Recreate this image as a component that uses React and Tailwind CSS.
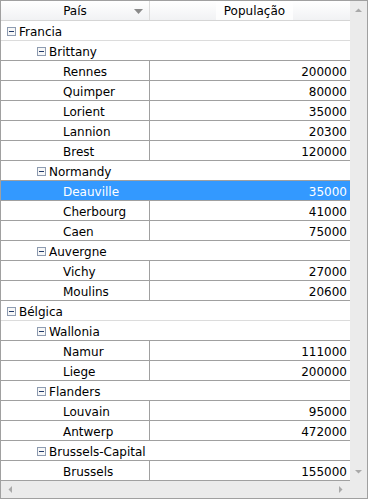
import React from 'react';

const rows = [
  { level: 0, name: 'Francia' },
  { level: 1, name: 'Brittany' },
  { level: 2, name: 'Rennes', pop: '200000' },
  { level: 2, name: 'Quimper', pop: '80000' },
  { level: 2, name: 'Lorient', pop: '35000' },
  { level: 2, name: 'Lannion', pop: '20300' },
  { level: 2, name: 'Brest', pop: '120000' },
  { level: 1, name: 'Normandy' },
  { level: 2, name: 'Deauville', pop: '35000', selected: true },
  { level: 2, name: 'Cherbourg', pop: '41000' },
  { level: 2, name: 'Caen', pop: '75000' },
  { level: 1, name: 'Auvergne' },
  { level: 2, name: 'Vichy', pop: '27000' },
  { level: 2, name: 'Moulins', pop: '20600' },
  { level: 0, name: 'Bélgica' },
  { level: 1, name: 'Wallonia' },
  { level: 2, name: 'Namur', pop: '111000' },
  { level: 2, name: 'Liege', pop: '200000' },
  { level: 1, name: 'Flanders' },
  { level: 2, name: 'Louvain', pop: '95000' },
  { level: 2, name: 'Antwerp', pop: '472000' },
  { level: 1, name: 'Brussels-Capital' },
  { level: 2, name: 'Brussels', pop: '155000' },
];

const MinusBox = () => (
  <svg width="9" height="9" viewBox="0 0 9 9" className="shrink-0">
    <rect x="0.5" y="0.5" width="8" height="8" fill="#f7f7f7" stroke="#8d9bb0" />
    <line x1="2" y1="4.5" x2="7" y2="4.5" stroke="#1f3a6a" />
  </svg>
);

const Arrow = ({ dir }) => {
  const pts = {
    up: '0,4 3.5,0.5 7,4',
    down: '0,0 3.5,3.5 7,0',
    left: '4,0 0.5,3.5 4,7',
    right: '0,0 3.5,3.5 0,7',
  }[dir];
  const vertical = dir === 'up' || dir === 'down';
  return (
    <svg width={vertical ? 7 : 4} height={vertical ? 4 : 7} viewBox={vertical ? '0 0 7 4' : '0 0 4 7'}>
      <polygon points={pts} fill="#a9a9a9" />
    </svg>
  );
};

const Row = ({ row, next }) => {
  const leaf = row.pop !== undefined;
  const dark = leaf || (next && next.pop !== undefined) || !next;
  const border = dark ? 'border-[#a0a0a0]' : 'border-[#dcdcdc]';
  const sel = row.selected ? 'bg-[#3399ff] text-white' : 'bg-white text-black';

  if (!leaf) {
    return (
      <div className={`flex items-center h-[20px] border-b ${border} ${sel}`}>
        <div className={`flex items-center gap-[3px] pt-[1px] ${row.level === 0 ? 'pl-[6px]' : 'pl-[36px]'}`}>
          <MinusBox />
          <span className="leading-none pt-[1px]">{row.name}</span>
        </div>
      </div>
    );
  }

  return (
    <div className={`flex h-[20px] border-b ${border} ${sel}`}>
      <div className={`w-[149px] border-r ${row.selected ? 'border-[#3399ff]' : 'border-[#a0a0a0]'} flex items-center pl-[62px]`}>
        <span className="leading-none pt-[3px]">{row.name}</span>
      </div>
      <div className="flex-1 flex items-center justify-end pr-[3px]">
        <span className="leading-none pt-[3px]">{row.pop}</span>
      </div>
    </div>
  );
};

export default function App() {
  return (
    <div
      className="w-[368px] h-[499px] border border-[#a0a0a0] bg-white flex flex-col text-[12px] text-black overflow-hidden"
      style={{ fontFamily: '"DejaVu Sans", Verdana, sans-serif' }}
    >
      <div className="flex flex-1 min-h-0">
        {/* grid */}
        <div className="flex-1 flex flex-col min-w-0">
          {/* header */}
          <div className="flex h-[20px] border-b border-[#d5d5d5] bg-gradient-to-b from-white to-[#f1f2f4] shrink-0">
            <div className="w-[149px] border-r border-[#dcdcdc] relative flex items-center justify-center">
              <span className="leading-none">País</span>
              <span className="absolute right-[6px] top-[8px]">
                <svg width="9" height="5" viewBox="0 0 9 5">
                  <polygon points="0,0 9,0 4.5,5" fill="#8a8a8a" />
                </svg>
              </span>
            </div>
            <div className="flex-1 flex items-center justify-center pl-[9px]">
              <span className="leading-none px-[8px] h-[18px] flex items-center bg-white/80">População</span>
            </div>
          </div>
          {/* rows */}
          <div className="flex flex-col">
            {rows.map((r, i) => (
              <Row key={r.name} row={r} next={rows[i + 1]} />
            ))}
          </div>
        </div>
        {/* vertical scrollbar */}
        <div className="w-[17px] bg-[#ebebeb] flex flex-col justify-between items-center py-[7px] shrink-0">
          <Arrow dir="up" />
          <Arrow dir="down" />
        </div>
      </div>
      {/* horizontal scrollbar */}
      <div className="flex h-[17px] shrink-0">
        <div className="flex-1 bg-[#ebebeb] flex items-center justify-between px-[7px]">
          <Arrow dir="left" />
          <Arrow dir="right" />
        </div>
        <div className="w-[17px] bg-[#ebebeb]" />
      </div>
    </div>
  );
}
